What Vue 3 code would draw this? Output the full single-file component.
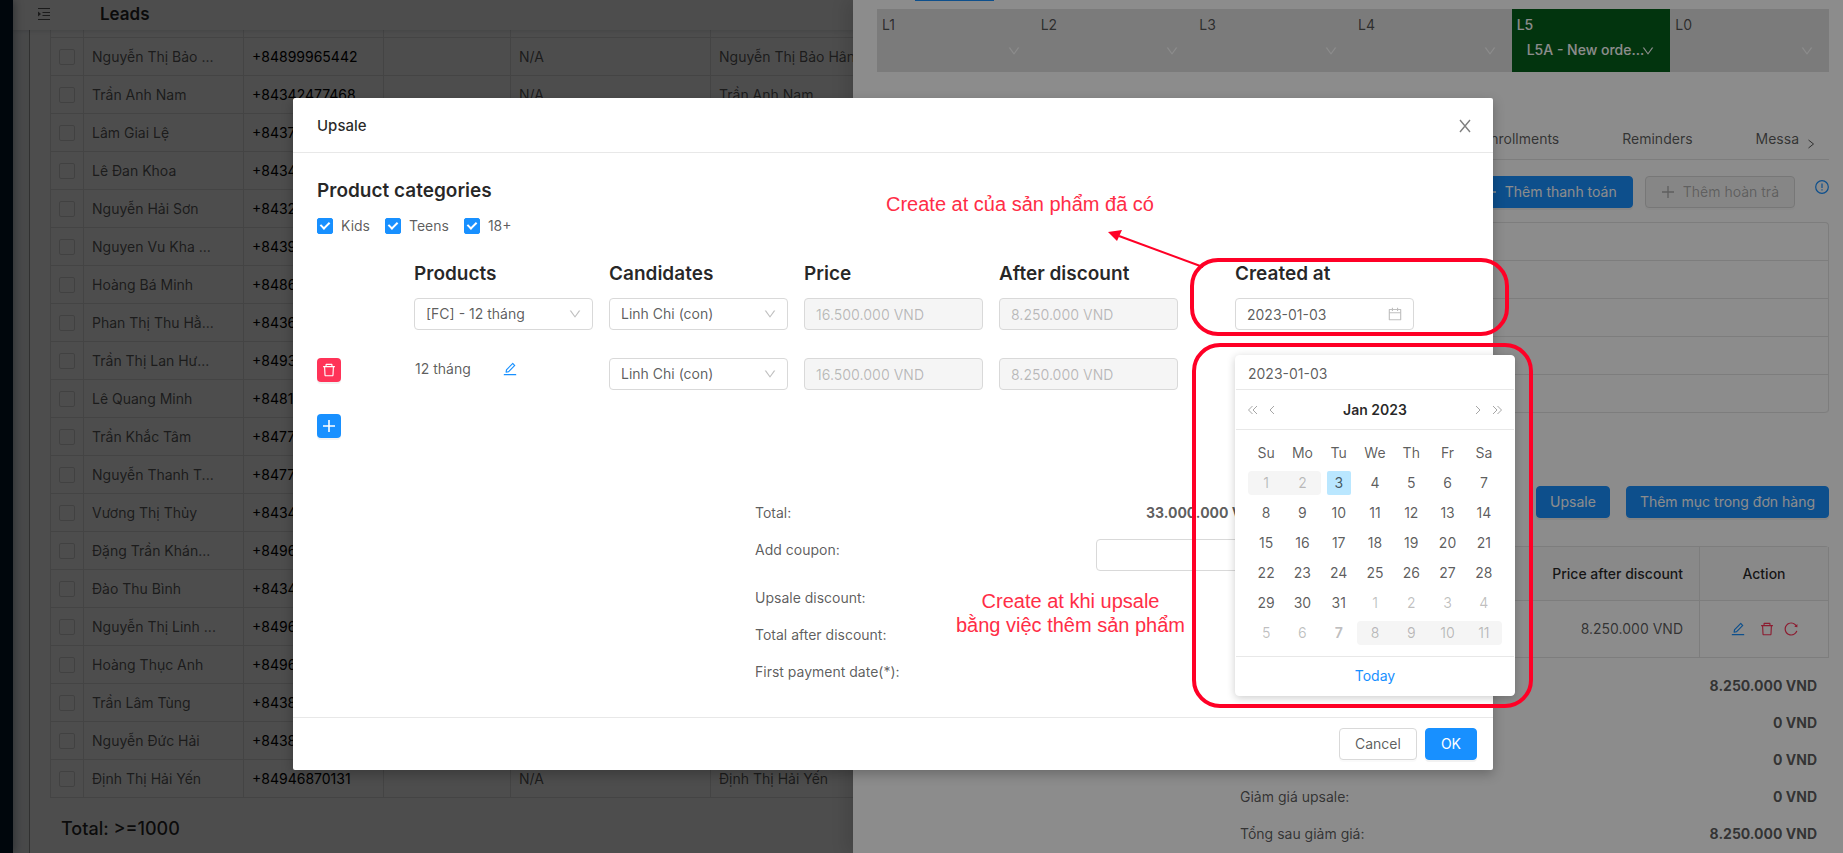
<script setup>
import { ref } from 'vue'

const icons = {
  down: 'M884 256h-75c-5.1 0-9.9 2.5-12.9 6.6L512 654.2 227.9 262.6c-3-4.1-7.8-6.6-12.9-6.6h-75c-6.5 0-10.3 7.4-6.5 12.7l352.6 486.1c12.8 17.6 39 17.6 51.7 0l352.6-486.1c3.9-5.3.1-12.7-6.4-12.7z',
  trash: 'M360 184h-8c4.4 0 8-3.6 8-8v8h304v-8c0 4.4 3.6 8 8 8h-8v72h72v-80c0-35.3-28.7-64-64-64H352c-35.3 0-64 28.7-64 64v80h72v-72zm504 72H160c-17.7 0-32 14.3-32 32v32c0 4.4 3.6 8 8 8h60.4l24.7 523c1.6 34.1 29.8 61 63.9 61h454c34.2 0 62.3-26.8 63.9-61l24.7-523H888c4.4 0 8-3.6 8-8v-32c0-17.7-14.3-32-32-32zM731.3 840H292.7l-24.2-512h487l-24.2 512z',
  edit: 'M257.7 752c2 0 4-.2 6-.5L431.9 722c2-.4 3.9-1.3 5.3-2.8l423.9-423.9a9.96 9.96 0 000-14.1L694.9 114.9c-1.9-1.9-4.4-2.9-7.1-2.9s-5.2 1-7.1 2.9L256.8 538.8c-1.5 1.5-2.4 3.3-2.8 5.3l-29.5 168.2a33.5 33.5 0 009.4 29.8c6.6 6.4 14.9 9.9 23.8 9.9zm67.4-174.4L687.8 215l73.3 73.3-362.7 362.6-88.9 15.7 15.6-89zM880 836H144c-17.7 0-32 14.3-32 32v36c0 4.4 3.6 8 8 8h784c4.4 0 8-3.6 8-8v-36c0-17.7-14.3-32-32-32z',
  calendar: 'M880 184H712v-64c0-4.4-3.6-8-8-8h-56c-4.4 0-8 3.6-8 8v64H384v-64c0-4.4-3.6-8-8-8h-56c-4.4 0-8 3.6-8 8v64H144c-17.7 0-32 14.3-32 32v664c0 17.7 14.3 32 32 32h736c17.7 0 32-14.3 32-32V216c0-17.7-14.3-32-32-32zm-40 656H184V460h656v380zM184 392V256h128v48c0 4.4 3.6 8 8 8h56c4.4 0 8-3.6 8-8v-48h256v48c0 4.4 3.6 8 8 8h56c4.4 0 8-3.6 8-8v-48h128v136H184z',
  reload: 'M909.1 209.3l-56.4 44.1C775.8 155.1 656.2 92 521.9 92 290 92 102.3 279.5 102 511.5 101.7 743.7 289.8 932 521.9 932c181.3 0 335.8-115 394.6-276.1 1.5-4.2-.7-8.9-4.9-10.3l-56.7-19.5a8 8 0 00-10.1 4.8c-1.8 5-3.8 10-5.9 14.9-17.3 41-42.1 77.8-73.7 109.4A344.77 344.77 0 01655.9 829c-42.3 17.9-87.4 27-133.8 27-46.5 0-91.5-9.1-133.8-27A341.5 341.5 0 01279 755.2a342.16 342.16 0 01-73.7-109.4c-17.9-42.4-27-87.4-27-133.9s9.1-91.5 27-133.9c17.3-41 42.1-77.8 73.7-109.4 31.6-31.6 68.4-56.4 109.3-73.8 42.3-17.9 87.4-27 133.8-27 46.5 0 91.5 9.1 133.8 27a341.5 341.5 0 01109.3 73.8c9.9 9.9 19.2 20.4 27.8 31.4l-60.2 47a8 8 0 003 14.1l175.6 43c5 1.2 9.9-2.6 9.9-7.7l.8-180.9c-.1-6.6-7.8-10.3-13-6.2z',
}

const leads = [
  ['Nguyễn Thị Bảo ...', '+84899965442', 'Nguyễn Thị Bảo Hân'],
  ['Trần Anh Nam', '+84342477468', 'Trần Anh Nam'],
  ['Lâm Giai Lệ', '+8437', ''],
  ['Lê Đan Khoa', '+8434', ''],
  ['Nguyễn Hải Sơn', '+8432', ''],
  ['Nguyen Vu Kha ...', '+8439', ''],
  ['Hoàng Bá Minh', '+8486', ''],
  ['Phan Thị Thu Hằ...', '+8436', ''],
  ['Trần Thị Lan Hư...', '+8493', ''],
  ['Lê Quang Minh', '+8481', ''],
  ['Trần Khắc Tâm', '+8477', ''],
  ['Nguyễn Thanh T...', '+8477', ''],
  ['Vương Thị Thủy', '+8434', ''],
  ['Đặng Trần Khán...', '+8496', ''],
  ['Đào Thu Bình', '+8434', ''],
  ['Nguyễn Thị Linh ...', '+8496', ''],
  ['Hoàng Thục Anh', '+8496', ''],
  ['Trần Lâm Tùng', '+8438', ''],
  ['Nguyễn Đức Hải', '+8438', ''],
  ['Định Thị Hải Yến', '+84946870131', 'Định Thị Hải Yến'],
]

const steps = [
  { name: 'L1' }, { name: 'L2' }, { name: 'L3' }, { name: 'L4' },
  { name: 'L5', value: 'L5A - New orde...' }, { name: 'L0' },
]

const orderTotals = [
  ['', '8.250.000 VND'],
  ['', '0 VND'],
  ['', '0 VND'],
  ['Giảm giá upsale:', '0 VND'],
  ['Tổng sau giảm giá:', '8.250.000 VND'],
]

const categories = ref([
  { name: 'Kids', on: true },
  { name: 'Teens', on: true },
  { name: '18+', on: true },
])

const weekdays = ['Su', 'Mo', 'Tu', 'We', 'Th', 'Fr', 'Sa']
const weeks = Array.from({ length: 6 }, (_, w) =>
  Array.from({ length: 7 }, (_, d) => {
    const n = w * 7 + d + 1
    const disabled = n < 3 || n > 38
    return {
      label: n > 31 ? n - 31 : n,
      disabled,
      out: n > 31,
      selected: n === 3,
      last: n === 38,
      start: n === 1 || n === 39,
      end: n === 2 || n === 42,
    }
  })
)
const date = ref('2023-01-03')
</script>

<template>
  <div class="screen">
    <div class="page">
      <nav class="sider"></nav>
      <div class="main">
        <header class="topbar">
          <svg class="fold" viewBox="0 0 14 14" width="14" height="14" fill="none" stroke="currentColor" aria-hidden="true">
            <path d="M1 1.5h12M5.500 5.500h7.500M5.500 8.500h7.500M1 12.500h12" />
            <path d="M1 4.500v5l3-2.500z" fill="currentColor" stroke="none" />
          </svg>
          <h1>Leads</h1>
        </header>
        <main class="content">
          <table class="leads">
            <colgroup><col class="c1" /><col class="c2" /><col class="c3" /><col class="c4" /><col class="c5" /><col /></colgroup>
            <tbody>
              <tr class="cut"><td></td><td></td><td></td><td></td><td></td><td></td></tr>
              <tr v-for="(l, i) in leads" :key="i">
                <td class="pick"><input type="checkbox" class="check" :aria-label="l[0]" /></td>
                <td>{{ l[0] }}</td>
                <td class="phone">{{ l[1] }}</td>
                <td></td>
                <td>N/A</td>
                <td>{{ l[2] }}</td>
              </tr>
            </tbody>
          </table>
          <p class="count">Total: &gt;=1000</p>
        </main>
      </div>
    </div>

    <div class="mask drawer-mask">
      <aside class="drawer">
        <div class="peek"></div>
        <div class="steps">
          <label v-for="s in steps" :key="s.name" class="step" :class="{ active: s.value }">
            <span>{{ s.name }}</span>
            <span class="pickline">
              <select><option>{{ s.value || '' }}</option></select>
              <svg class="chev" viewBox="0 0 1024 1024" width="14" height="14" fill="currentColor"><path :d="icons.down" /></svg>
            </span>
          </label>
        </div>
        <div class="tabs">
          <a href="#">Enrollments</a><a href="#">Reminders</a><a href="#">Messa</a>
          <svg viewBox="0 0 10 10" width="10" height="10" fill="none" stroke="currentColor"><path d="M2.500 1 7.500 5l-5 4" /></svg>
        </div>
        <div class="actions">
          <button type="button" class="btn primary"><svg viewBox="0 0 14 14" width="14" height="14" stroke="currentColor" stroke-width="1.300"><path d="M7 1v12M1 7h12" /></svg>Thêm thanh toán</button>
          <button type="button" class="btn" disabled><svg viewBox="0 0 14 14" width="14" height="14" stroke="currentColor" stroke-width="1.300"><path d="M7 1v12M1 7h12" /></svg>Thêm hoàn trả</button>
          <svg class="info" viewBox="0 0 14 14" width="14" height="14" fill="none" stroke="currentColor" stroke-width="1.200"><circle cx="7" cy="7" r="6.300" /><path d="M7 3.500v4.500M7 9.300v1.300" /></svg>
        </div>
        <div class="rows"><div v-for="n in 5" :key="n"></div></div>
        <div class="orderbar">
          <button type="button" class="btn primary">Upsale</button>
          <button type="button" class="btn primary">Thêm mục trong đơn hàng</button>
        </div>
        <table class="order">
          <thead><tr><th class="num">Price after discount</th><th class="act">Action</th></tr></thead>
          <tbody>
            <tr>
              <td class="num">8.250.000 VND</td>
              <td>
                <div class="tools">
                  <button type="button" class="icon blue" aria-label="Edit"><svg viewBox="0 0 1024 1024" width="16" height="16" fill="currentColor"><path :d="icons.edit" /></svg></button>
                  <button type="button" class="icon red wide" aria-label="Delete"><svg viewBox="0 0 1024 1024" width="16" height="16" fill="currentColor"><path :d="icons.trash" /></svg></button>
                  <button type="button" class="icon red" aria-label="Reload"><svg viewBox="0 0 1024 1024" width="16" height="16" fill="currentColor"><path :d="icons.reload" /></svg></button>
                </div>
              </td>
            </tr>
          </tbody>
        </table>
        <dl class="sums">
          <div v-for="(t, i) in orderTotals" :key="i"><dt>{{ t[0] }}</dt><dd>{{ t[1] }}</dd></div>
        </dl>
      </aside>
    </div>

    <div class="mask modal-mask">
      <section class="modal" role="dialog" aria-labelledby="modal-title">
        <header class="modal-head">
          <h2 id="modal-title">Upsale</h2>
          <button type="button" class="icon close" aria-label="Close">
            <svg viewBox="0 0 14 14" width="14" height="14" stroke="currentColor" stroke-width="1.400"><path d="M2 1l10 12M12 1 2 13" /></svg>
          </button>
        </header>
        <div class="modal-body">
          <h3>Product categories</h3>
          <div class="cats">
            <label v-for="c in categories" :key="c.name"><input v-model="c.on" type="checkbox" class="check" />{{ c.name }}</label>
          </div>

          <div class="grid heads">
            <h3 class="p">Products</h3><h3>Candidates</h3><h3>Price</h3><h3>After discount</h3><h3 class="at">Created at</h3>
          </div>
          <div class="grid line">
            <div class="field p">
              <select aria-label="Product"><option>[FC] - 12 tháng</option></select>
              <svg class="chev" viewBox="0 0 1024 1024" width="14" height="14" fill="currentColor"><path :d="icons.down" /></svg>
            </div>
            <div class="field">
              <select aria-label="Candidate"><option>Linh Chi (con)</option></select>
              <svg class="chev" viewBox="0 0 1024 1024" width="14" height="14" fill="currentColor"><path :d="icons.down" /></svg>
            </div>
            <input class="text" disabled value="16.500.000 VND" aria-label="Price" />
            <input class="text" disabled value="8.250.000 VND" aria-label="After discount" />
            <div class="field at">
              <input v-model="date" class="text" aria-label="Created at" />
              <svg class="cal-icon" viewBox="0 0 1024 1024" width="16" height="16" fill="currentColor"><path :d="icons.calendar" /></svg>
            </div>
          </div>
          <div class="grid line">
            <button type="button" class="square danger" aria-label="Remove product"><svg viewBox="0 0 1024 1024" width="16" height="16" fill="currentColor"><path :d="icons.trash" /></svg></button>
            <div class="added">
              <span>12 tháng</span>
              <button type="button" class="icon blue" aria-label="Edit product"><svg viewBox="0 0 1024 1024" width="16" height="16" fill="currentColor"><path :d="icons.edit" /></svg></button>
            </div>
            <div class="field">
              <select aria-label="Candidate"><option>Linh Chi (con)</option></select>
              <svg class="chev" viewBox="0 0 1024 1024" width="14" height="14" fill="currentColor"><path :d="icons.down" /></svg>
            </div>
            <input class="text" disabled value="16.500.000 VND" aria-label="Price" />
            <input class="text" disabled value="8.250.000 VND" aria-label="After discount" />
            <div class="picker at">
              <div class="popup">
                <input v-model="date" class="pop-input" aria-label="Date" />
                <div class="pop-head">
                  <button type="button" class="icon" aria-label="Previous year"><svg viewBox="0 0 11 10" width="11" height="10" fill="none" stroke="currentColor"><path d="M5.500 1 1.500 5l4 4M10 1 6 5l4 4" /></svg></button>
                  <button type="button" class="icon" aria-label="Previous month"><svg viewBox="0 0 6 10" width="6" height="10" fill="none" stroke="currentColor"><path d="M5 1 1 5l4 4" /></svg></button>
                  <strong>Jan 2023</strong>
                  <button type="button" class="icon" aria-label="Next month"><svg viewBox="0 0 6 10" width="6" height="10" fill="none" stroke="currentColor"><path d="M1 1l4 4-4 4" /></svg></button>
                  <button type="button" class="icon" aria-label="Next year"><svg viewBox="0 0 11 10" width="11" height="10" fill="none" stroke="currentColor"><path d="M1 1l4 4-4 4M5.500 1l4 4-4 4" /></svg></button>
                </div>
                <table class="cal">
                  <thead><tr><th v-for="d in weekdays" :key="d">{{ d }}</th></tr></thead>
                  <tbody>
                    <tr v-for="(w, i) in weeks" :key="i">
                      <td v-for="(d, j) in w" :key="j" :class="d"><button type="button" :disabled="d.disabled">{{ d.label }}</button></td>
                    </tr>
                  </tbody>
                </table>
                <div class="today"><a href="#">Today</a></div>
              </div>
            </div>
          </div>
          <button type="button" class="square add" aria-label="Add product"><svg viewBox="0 0 14 14" width="14" height="14" stroke="currentColor" stroke-width="1.600"><path d="M7 1v12M1 7h12" /></svg></button>

          <div class="summary">
            <div class="srow"><span>Total:</span><strong>33.000.000 VND</strong></div>
            <div class="srow tall"><label for="coupon">Add coupon:</label><input id="coupon" class="text" /></div>
            <div class="srow"><span>Upsale discount:</span></div>
            <div class="srow"><span>Total after discount:</span></div>
            <div class="srow"><span>First payment date(*):</span></div>
          </div>
        </div>
        <footer class="modal-foot">
          <button type="button" class="btn">Cancel</button>
          <button type="button" class="btn primary">OK</button>
        </footer>

        <div class="outline first"></div>
        <div class="outline second"></div>
        <svg class="arrow" viewBox="0 0 98 40" width="98" height="40" aria-hidden="true">
          <path d="M12 6 96 37" stroke="#ff0026" stroke-width="2" />
          <path d="M1 2l14-2-5 11z" fill="#ff0026" />
        </svg>
        <p class="note one">Create at của sản phẩm đã có</p>
        <p class="note two">Create at khi upsale<br />bằng việc thêm sản phẩm</p>
      </section>
    </div>
  </div>
</template>

<style>
body {
  overflow: hidden;
}
</style>

<style scoped>
.screen {
  position: relative;
  height: 100vh;
  overflow: hidden;
  font: 14px/22px Inter, "Noto Sans", sans-serif;
  color: rgba(0, 0, 0, 0.65);
  background: #fff;
}
.screen *,
.screen *::before,
.screen *::after {
  box-sizing: border-box;
}
h1, h2, h3, p, dl, dd {
  margin: 0;
}
input, select, button {
  font: inherit;
  color: inherit;
  margin: 0;
}
svg {
  display: block;
  flex: none;
}
a {
  color: inherit;
  text-decoration: none;
}
.page {
  display: flex;
  height: 100%;
  isolation: isolate;
}
.sider {
  flex: 0 0 13px;
  background: #001529;
  box-shadow: 2px 0 8px rgba(0, 21, 41, 0.35);
  z-index: 2;
}
.main {
  flex: 1;
  min-width: 0;
  background: #f0f2f5;
}
.topbar {
  position: relative;
  display: flex;
  align-items: center;
  gap: 49px;
  height: 30px;
  padding: 0 24px 2px;
  background: #fff;
  box-shadow: 0 1px 4px rgba(0, 21, 41, 0.12);
}
.topbar h1 {
  font-size: 17px;
  font-weight: 600;
  color: rgba(0, 0, 0, 0.85);
}
.content {
  margin-left: 16px;
  padding-left: 20px;
  min-height: 100%;
  border-left: 1px solid #a0a0a0;
  background: #fff;
}
.leads {
  width: 100%;
  table-layout: fixed;
  border-collapse: separate;
  border-spacing: 0;
  border-left: 1px solid #e4e4e4;
}
.c1 { width: 33px; }
.c2 { width: 160px; }
.c3 { width: 140px; }
.c4 { width: 127px; }
.c5 { width: 200px; }
.leads td {
  height: 38px;
  padding: 0 8px;
  border-right: 1px solid #e4e4e4;
  border-bottom: 1px solid #e4e4e4;
  white-space: nowrap;
}
.leads .cut td {
  height: 8px;
}
.phone {
  color: #000;
}
.check {
  appearance: none;
  display: block;
  position: relative;
  width: 16px;
  height: 16px;
  border: 1px solid #d9d9d9;
  border-radius: 2px;
  background: #fff;
}
.check:checked {
  border-color: #1890ff;
  background: #1890ff;
}
.check:checked::after {
  content: "";
  position: absolute;
  left: 4px;
  top: 1px;
  width: 6px;
  height: 9px;
  border: solid #fff;
  border-width: 0 2px 2px 0;
  transform: rotate(45deg);
}
.count {
  padding: 20px 11px;
  font-size: 18px;
  font-weight: 500;
  color: rgba(0, 0, 0, 0.85);
}
.mask {
  position: absolute;
  inset: 0;
  display: flex;
  background: rgba(0, 0, 0, 0.45);
}
.drawer-mask {
  justify-content: flex-end;
}
.drawer {
  width: 990px;
  height: 100%;
  overflow: hidden;
  padding: 0 14px 0 24px;
  background: #fff;
  box-shadow: -6px 0 16px rgba(0, 0, 0, 0.12);
}
.peek {
  width: 79px;
  height: 1px;
  margin: 0 0 8px 38px;
  background: #1890ff;
}
.steps {
  display: grid;
  grid-template-columns: repeat(6, 1fr);
  background: #e1e1e1;
}
.step {
  height: 63px;
  padding: 5px 15px 0 5px;
}
.step > span {
  display: block;
}
.step.active {
  background: #055f1b;
  color: #fff;
  font-weight: 500;
}
.pickline {
  position: relative;
  margin-top: 3px;
  padding-left: 10px;
}
.pickline select {
  appearance: none;
  display: block;
  width: 100%;
  height: 22px;
  padding: 0;
  border: 0;
  background: none;
}
.pickline .chev {
  position: absolute;
  right: 0;
  top: 5px;
  color: #fff;
}
.tabs {
  display: flex;
  align-items: center;
  justify-content: flex-end;
  gap: 63px;
  height: 41px;
  margin-top: 47px;
  padding-right: 13px;
  border-bottom: 1px solid #e4e4e4;
}
.tabs svg {
  margin: 10px 0 0 -56px;
}
.btn {
  display: inline-flex;
  align-items: center;
  justify-content: center;
  gap: 8px;
  height: 32px;
  padding: 0 15px;
  border: 1px solid #d9d9d9;
  border-radius: 4px;
  background: #fff;
  box-shadow: 0 2px 0 rgba(0, 0, 0, 0.02);
}
.btn.primary {
  border-color: #1890ff;
  background: #1890ff;
  color: #fff;
  box-shadow: 0 2px 0 rgba(0, 0, 0, 0.05);
}
.btn:disabled {
  background: #f5f5f5;
  color: rgba(0, 0, 0, 0.3);
}
.actions {
  display: flex;
  justify-content: flex-end;
  margin-top: 16px;
  gap: 12px;
}
.info {
  margin: 4px 0 0 8px;
  color: #1890ff;
}
.rows {
  margin-top: 14px;
  border: 1px solid #e4e4e4;
  border-bottom: 0;
  border-radius: 4px;
}
.rows div {
  height: 38px;
  border-bottom: 1px solid #e4e4e4;
}
.rows div:last-child {
  border-radius: 0 0 4px 4px;
}
.orderbar {
  display: flex;
  justify-content: flex-end;
  gap: 16px;
  margin: 73px 0 28px;
}
.orderbar .btn {
  padding: 0 13px;
}
.order {
  width: 100%;
  border-collapse: separate;
  border-spacing: 0;
  border-top: 1px solid #e4e4e4;
  border-radius: 0 4px 0 0;
}
.order th,
.order td {
  padding: 0 16px;
  border-right: 1px solid #e4e4e4;
  border-bottom: 1px solid #e4e4e4;
  height: 57px;
}
.order th {
  height: 54px;
  font-weight: 500;
  background: #fafafa;
  color: rgba(0, 0, 0, 0.85);
}
.order .num {
  text-align: right;
}
.order .act {
  width: 129px;
}
.tools {
  display: flex;
  align-items: center;
  justify-content: center;
}
.icon {
  display: inline-flex;
  padding: 0;
  border: 0;
  background: none;
}
.blue { color: #1890ff; }
.red { color: #ff3358; }
.wide { margin: 0 8px 0 13px; }
.sums {
  padding-top: 9px;
}
.sums div {
  display: flex;
  justify-content: space-between;
  align-items: center;
  height: 37px;
  padding: 0 12px 0 363px;
}
.sums dd {
  font-weight: 700;
}
.modal-mask {
  align-items: flex-start;
  justify-content: center;
  padding: 98px 57px 0 0;
}
.modal {
  position: relative;
  width: 1200px;
  border-radius: 2px;
  background: #fff;
  box-shadow: 0 4px 12px rgba(0, 0, 0, 0.25);
}
.modal-head {
  display: flex;
  align-items: center;
  justify-content: space-between;
  height: 55px;
  padding: 2px 21px 0 24px;
  border-bottom: 1px solid #e8e8e8;
}
.modal-head h2 {
  font-size: 15px;
  font-weight: 500;
  color: rgba(0, 0, 0, 0.85);
}
.close {
  color: rgba(0, 0, 0, 0.5);
}
.modal-body {
  padding: 24px 24px 26px;
}
h3 {
  font-size: 19px;
  line-height: 28px;
  font-weight: 600;
  color: rgba(0, 0, 0, 0.85);
  white-space: nowrap;
}
.cats {
  display: flex;
  gap: 15px;
  margin-top: 10px;
}
.cats label {
  display: flex;
  align-items: center;
  gap: 8px;
}
.grid {
  display: grid;
  grid-template-columns: 81px repeat(4, 1fr) 25px 1fr 39px;
  column-gap: 16px;
}
.p { grid-column: 2; }
.at { grid-column: 7; }
.heads {
  margin: 23px 0 10px;
}
.line {
  height: 60px;
  align-items: start;
}
.field {
  position: relative;
}
.field select,
.text {
  display: block;
  appearance: none;
  width: 100%;
  height: 32px;
  padding: 0 11px;
  border: 1px solid #d9d9d9;
  border-radius: 4px;
  background: #fff;
}
.text:disabled {
  background: #f5f5f5;
  color: rgba(0, 0, 0, 0.25);
}
.field .chev,
.cal-icon {
  position: absolute;
  right: 11px;
  top: 9px;
  color: rgba(0, 0, 0, 0.25);
}
.field .cal-icon {
  top: 8px;
}
.square {
  display: flex;
  align-items: center;
  justify-content: center;
  width: 24px;
  height: 24px;
  padding: 0;
  border: 0;
  border-radius: 4px;
  color: #fff;
  box-shadow: 0 2px 0 rgba(0, 0, 0, 0.05);
}
.danger { background: #ff3358; }
.add {
  margin-top: -4px;
  background: #1890ff;
}
.added {
  display: flex;
  align-items: center;
  gap: 31px;
  padding-left: 1px;
}
.picker {
  position: relative;
}
.popup {
  position: absolute;
  z-index: 1;
  left: 0;
  top: -3px;
  width: 280px;
  border: 1px solid #fff;
  border-radius: 4px;
  background: #fff;
  box-shadow: 0 2px 8px rgba(0, 0, 0, 0.2);
}
.pop-input {
  display: block;
  width: 100%;
  height: 34px;
  padding: 2px 12px 0;
  border: 0;
  border-bottom: 1px solid #e8e8e8;
  background: none;
}
.pop-head {
  display: flex;
  align-items: center;
  gap: 11px;
  height: 40px;
  padding: 0 11px;
  border-bottom: 1px solid #e8e8e8;
}
.pop-head .icon {
  color: rgba(0, 0, 0, 0.35);
}
.pop-head strong {
  flex: 1;
  text-align: center;
  font-weight: 600;
  color: rgba(0, 0, 0, 0.85);
}
.cal {
  width: 254px;
  margin: 8px 12px;
  table-layout: fixed;
  border-collapse: separate;
  border-spacing: 0;
  text-align: center;
}
.cal th,
.cal td {
  height: 30px;
  padding: 0;
  font-weight: 400;
}
.cal button {
  display: block;
  width: 24px;
  height: 24px;
  margin: 0 auto;
  padding: 0;
  border: 0;
  border-radius: 2px;
  background: none;
}
.cal .out button { color: rgba(0, 0, 0, 0.25); }
.cal .last button { font-weight: 700; }
.cal .selected button { background: #bae7ff; }
.cal .disabled button {
  width: 100%;
  border-radius: 0;
  background: #f5f5f5;
  color: rgba(0, 0, 0, 0.25);
}
.cal .start button { border-radius: 4px 0 0 4px; }
.cal .end button { border-radius: 0 4px 4px 0; }
.today {
  height: 39px;
  line-height: 38px;
  border-top: 1px solid #e8e8e8;
  text-align: center;
  color: #1890ff;
}
.summary {
  margin: 57px 0 0 438px;
}
.srow {
  display: flex;
  justify-content: space-between;
  width: 508px;
  height: 37px;
  padding-top: 7px;
}
.srow strong {
  font-weight: 700;
}
.srow.tall {
  width: 660px;
  height: 48px;
}
.tall .text {
  width: 319px;
}
.modal-foot {
  display: flex;
  justify-content: flex-end;
  gap: 8px;
  padding: 10px 16px;
  border-top: 1px solid #e8e8e8;
}
.outline {
  position: absolute;
  z-index: 2;
  border: 4px solid #ff0026;
  border-radius: 28px;
  pointer-events: none;
}
.first {
  left: 897px;
  top: 160px;
  width: 319px;
  height: 78px;
}
.second {
  left: 899px;
  top: 245px;
  width: 341px;
  height: 365px;
}
.arrow {
  position: absolute;
  left: 814px;
  top: 132px;
}
.note {
  position: absolute;
  font: 20px/24px "Liberation Sans", sans-serif;
  color: #ff2d46;
  text-align: center;
  white-space: nowrap;
}
.one {
  left: 593px;
  top: 94px;
}
.two {
  left: 663px;
  top: 491px;
}
</style>
